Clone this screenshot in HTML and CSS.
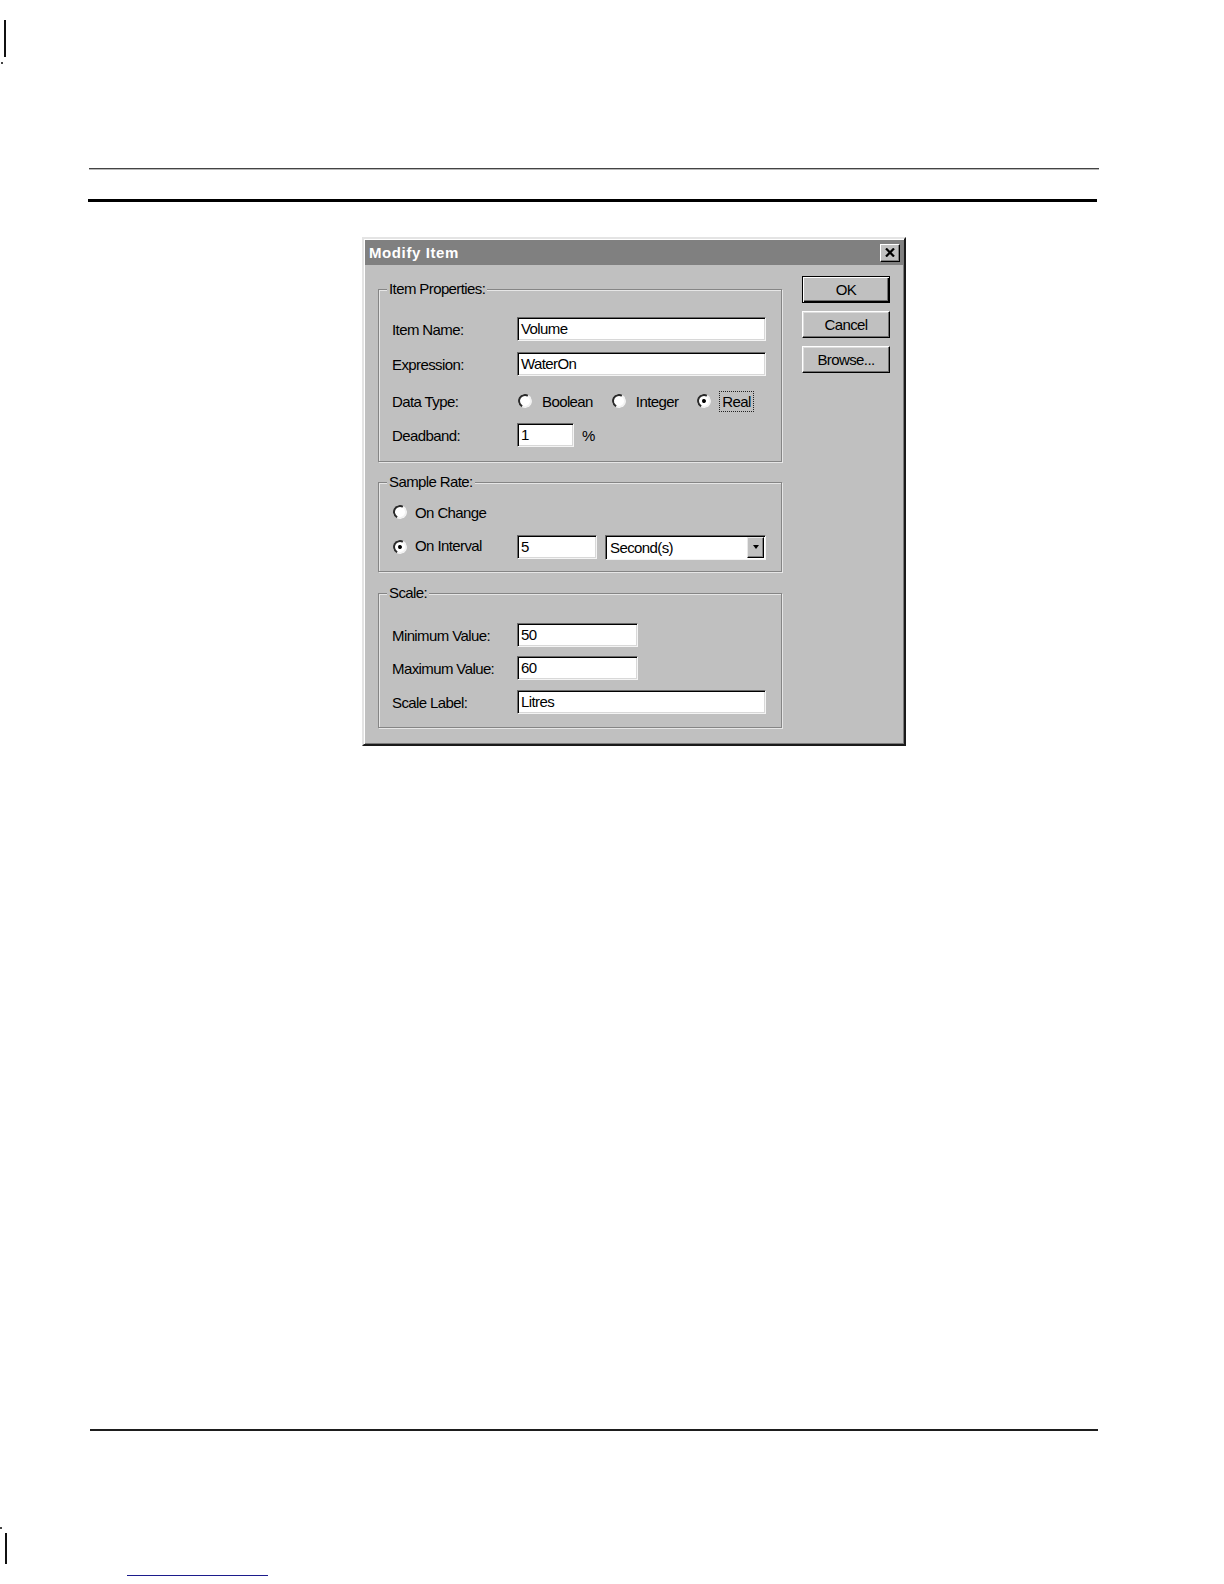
FILE: index.html
```html
<!DOCTYPE html>
<html>
<head>
<meta charset="utf-8">
<title>Modify Item</title>
<link rel="stylesheet" href="styles.css">
</head>
<body>
<div class="page">
  <div class="crop-mark crop-mark-top"></div>
  <div class="crop-dot crop-dot-top"></div>
  <div class="rule-thin"></div>
  <div class="rule-thick"></div>

  <div class="dialog">
    <div class="titlebar">
      <span class="title">Modify Item</span>
      <span class="close-btn">
        <svg width="10" height="9" viewBox="0 0 10 9"><path d="M1 0.5 L9 8.5 M9 0.5 L1 8.5" stroke="#000" stroke-width="2.2" fill="none"/></svg>
      </span>
    </div>
    <div class="dialog-body">
      <div class="groups">
        <div class="group group-props">
          <span class="group-title">Item Properties:</span>
          <div class="row row-name"><span class="lbl">Item Name:</span><div class="edit w-wide">Volume</div></div>
          <div class="row row-expr"><span class="lbl">Expression:</span><div class="edit w-wide">WaterOn</div></div>
          <div class="row row-type"><span class="lbl">Data Type:</span>
            <div class="radio-set">
              <span class="opt"><span class="radio"></span><span class="opt-text">Boolean</span></span>
              <span class="opt"><span class="radio"></span><span class="opt-text">Integer</span></span>
              <span class="opt"><span class="radio checked"></span><span class="opt-text focus">Real</span></span>
            </div>
          </div>
          <div class="row row-dead"><span class="lbl">Deadband:</span><div class="edit w-small">1</div><span class="unit">%</span></div>
        </div>

        <div class="group group-rate">
          <span class="group-title">Sample Rate:</span>
          <div class="row row-change"><span class="opt opt-col"><span class="radio"></span><span class="opt-text">On Change</span></span></div>
          <div class="row row-interval">
            <span class="opt opt-col"><span class="radio checked"></span><span class="opt-text">On Interval</span></span>
            <div class="edit w-interval">5</div>
            <div class="combo"><span class="combo-text">Second(s)</span><span class="combo-btn"><span class="arrow"></span></span></div>
          </div>
        </div>

        <div class="group group-scale">
          <span class="group-title">Scale:</span>
          <div class="row row-min"><span class="lbl">Minimum Value:</span><div class="edit w-mid">50</div></div>
          <div class="row row-max"><span class="lbl">Maximum Value:</span><div class="edit w-mid">60</div></div>
          <div class="row row-label"><span class="lbl">Scale Label:</span><div class="edit w-wide">Litres</div></div>
        </div>
      </div>

      <div class="buttons">
        <div class="btn btn-default">OK</div>
        <div class="btn">Cancel</div>
        <div class="btn">Browse...</div>
      </div>
    </div>
  </div>

  <div class="rule-bottom"></div>
  <div class="crop-dot crop-dot-bottom"></div>
  <div class="crop-mark crop-mark-bottom"></div>
  <div class="link-line"></div>
</div>
</body>
</html>
```

FILE: styles.css
```css
html, body {
  margin: 0;
  padding: 0;
  background: #ffffff;
}

.page {
  display: flow-root;
  width: 1224px;
  height: 1584px;
  font-family: "Liberation Sans", Arial, sans-serif;
  color: #000;
}

/* page marks and rules */
.crop-mark {
  width: 2px;
  background: #111;
}
.crop-mark-top {
  margin-top: 20px;
  margin-left: 4px;
  height: 37px;
}
.crop-dot {
  width: 2px;
  height: 2px;
  background: #444;
}
.crop-dot-top {
  margin-top: 5px;
  margin-left: 1px;
}
.rule-thin {
  margin-top: 104px;
  margin-left: 89px;
  width: 1010px;
  height: 1px;
  background: #444;
  border-bottom: 1px solid #b8b8b8;
}
.rule-thick {
  margin-top: 29px;
  margin-left: 88px;
  width: 1009px;
  height: 3px;
  background: #000;
}
.rule-bottom {
  margin-top: 683px;
  margin-left: 90px;
  width: 1008px;
  height: 2px;
  background: #1e1e1e;
}
.crop-dot-bottom {
  margin-top: 96px;
  margin-left: 0;
}
.crop-mark-bottom {
  margin-top: 4px;
  margin-left: 5px;
  height: 31px;
}
.link-line {
  margin-top: 11px;
  margin-left: 127px;
  width: 141px;
  height: 1px;
  background: #1c1c8c;
}

/* dialog */
.dialog {
  box-sizing: border-box;
  margin-top: 35px;
  margin-left: 362px;
  width: 544px;
  height: 509px;
  background: #c0c0c0;
  border: 2px solid;
  border-color: #e4e4e4 #1a1a1a #1a1a1a #e4e4e4;
  box-shadow: inset 1px 1px 0 #ffffff, inset -1px -1px 0 #7a7a7a;
  padding: 1px;
  font-size: 15px;
  letter-spacing: -0.6px;
}

.titlebar {
  height: 25px;
  background: #808080;
  display: flex;
  align-items: center;
  justify-content: space-between;
  padding: 0 3px 0 4px;
}
.title {
  color: #ffffff;
  font-weight: bold;
  font-size: 15px;
  letter-spacing: 0.6px;
  line-height: 25px;
}
.close-btn {
  box-sizing: border-box;
  width: 20px;
  height: 18px;
  background: #c0c0c0;
  border: 1px solid;
  border-color: #ffffff #000 #000 #ffffff;
  box-shadow: inset -1px -1px 0 #808080;
  display: flex;
  align-items: center;
  justify-content: center;
}

.dialog-body {
  display: flex;
  gap: 20px;
  padding: 0 13px 0 13px;
}

.groups {
  width: 404px;
  margin-top: 24px;
  display: flex;
  flex-direction: column;
}

.group {
  position: relative;
  box-sizing: border-box;
  width: 404px;
  border: 1px solid #858585;
  box-shadow: inset 1px 1px 0 #e6e6e6, 1px 1px 0 #e6e6e6;
  padding: 0 0 0 13px;
}
.group-rate { margin-top: 20px; padding-bottom: 12px; }
.group-scale { margin-top: 21px; padding-bottom: 13px; }
.group-props { padding-bottom: 14px; }

.group-title {
  position: absolute;
  top: -9px;
  left: 8px;
  padding: 0 2px;
  background: #c0c0c0;
  line-height: 16px;
}

.row {
  display: flex;
  align-items: center;
  height: 24px;
}
.row-name { margin-top: 27px; }
.row-expr { margin-top: 11px; }
.row-type { margin-top: 13px; }
.row-dead { margin-top: 10px; }
.row-change { margin-top: 17px; }
.row-interval { margin-top: 11px; }
.row-min { margin-top: 29px; }
.row-max { margin-top: 9px; }
.row-label { margin-top: 10px; }

.lbl {
  width: 125px;
  flex: none;
}

.edit {
  box-sizing: border-box;
  height: 24px;
  background: #ffffff;
  border: 1px solid;
  border-color: #6a6a6a #f4f4f4 #f4f4f4 #6a6a6a;
  box-shadow: inset 1px 1px 0 #000, inset -1px -1px 0 #d8d8d8;
  padding: 0 3px;
  line-height: 22px;
  flex: none;
}
.w-wide { width: 249px; }
.w-small { width: 57px; }
.w-mid { width: 121px; }
.w-interval { width: 80px; }

.unit {
  margin-left: 8px;
}

.radio-set {
  display: flex;
  align-items: center;
  gap: 19px;
  margin-left: 1px;
}
.opt {
  display: flex;
  align-items: center;
  gap: 10px;
}
.opt-col {
  width: 124px;
  margin-left: 1px;
  gap: 8px;
  flex: none;
}
.row-interval .opt-text {
  margin-top: -3px;
}
.radio {
  position: relative;
  box-sizing: border-box;
  width: 14px;
  height: 14px;
  border-radius: 50%;
  background: #ffffff;
  border: 2px solid;
  border-color: #2a2a2a #f2f2f2 #f2f2f2 #2a2a2a;
  transform: rotate(-15deg);
  flex: none;
}
.radio.checked::after {
  content: "";
  position: absolute;
  left: 3px;
  top: 3px;
  width: 4px;
  height: 4px;
  border-radius: 50%;
  background: #000;
}
.opt-text.focus {
  outline: 1px dotted #222;
  outline-offset: 1px;
  padding: 0 1px;
}

.combo {
  box-sizing: border-box;
  margin-left: 8px;
  width: 161px;
  height: 25px;
  background: #ffffff;
  border: 1px solid;
  border-color: #6a6a6a #f4f4f4 #f4f4f4 #6a6a6a;
  box-shadow: inset 1px 1px 0 #000;
  display: flex;
  align-items: stretch;
  padding: 1px;
}
.combo-text {
  flex: 1;
  padding-left: 3px;
  line-height: 21px;
}
.combo-btn {
  box-sizing: border-box;
  width: 17px;
  background: #c0c0c0;
  border: 1px solid;
  border-color: #e8e8e8 #000 #000 #e8e8e8;
  box-shadow: inset -1px -1px 0 #808080;
  display: flex;
  align-items: center;
  justify-content: center;
}
.arrow {
  width: 0;
  height: 0;
  border-left: 3px solid transparent;
  border-right: 3px solid transparent;
  border-top: 4px solid #000;
}

.buttons {
  margin-top: 11px;
  display: flex;
  flex-direction: column;
  gap: 8px;
}
.btn {
  box-sizing: border-box;
  width: 88px;
  height: 27px;
  background: #c0c0c0;
  border: 1px solid;
  border-color: #ffffff #000 #000 #ffffff;
  box-shadow: inset -1px -1px 0 #707070, inset 1px 1px 0 #dcdcdc;
  display: flex;
  align-items: center;
  justify-content: center;
}
.btn-default {
  border-color: #000;
  box-shadow: inset 1px 1px 0 #ffffff, inset -1px -1px 0 #000, inset -2px -2px 0 #707070;
}
```
